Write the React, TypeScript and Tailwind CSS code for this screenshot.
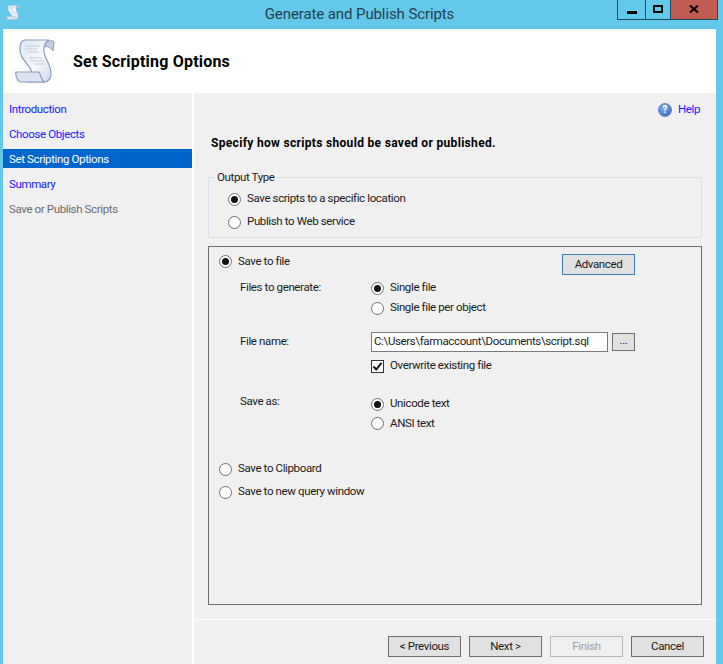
import React from "react";

function Radio({ on }: { on?: boolean }) {
  return (
    <span className="flex h-[13px] w-[13px] shrink-0 items-center justify-center rounded-full border border-[#707070] bg-white">
      {on && <span className="h-[7px] w-[7px] rounded-full bg-[#111111]" />}
    </span>
  );
}

function Opt({ on, label, className = "" }: { on?: boolean; label: string; className?: string }) {
  return (
    <div className={`flex items-center gap-[6px] ${className}`}>
      <Radio on={on} />
      <span>{label}</span>
    </div>
  );
}

function Scroll({ className }: { className: string }) {
  return (
    <svg viewBox="0 0 40 44" className={className}>
      <defs>
        <linearGradient id="sc" x1="0" y1="0" x2="1" y2="1">
          <stop offset="0" stopColor="#dfe6f2" />
          <stop offset="0.55" stopColor="#f6f8fc" />
          <stop offset="1" stopColor="#cfd8e8" />
        </linearGradient>
      </defs>
      <path d="M30 5 C33 1 38 1 39 3 L38 12 C35 8 32 7 30 8 Z" fill="#c3cee0" stroke="#8a9cbc" strokeWidth="1" />
      <path d="M10 1 L34 1 C30 3 28 8 29 13 C30 20 36 26 36 34 C36 40 33 43 29 43 L12 43 C17 41 18 37 16 31 C13 24 4 19 5 9 C5 4 7 1 10 1 Z" fill="url(#sc)" stroke="#8a9cbc" strokeWidth="1.2" />
      <path d="M1 33 L24 33 C26 36 26 40 29 43 L6 43 C3 43 0 37 1 33 Z" fill="#dde4f0" stroke="#8a9cbc" strokeWidth="1.2" />
      <path d="M11 7 H25 M10 10 H22 M13 13 H24 M14 19 H27 M15 22 H29 M19 25 H30" stroke="#c3ccdb" strokeWidth="1.2" />
    </svg>
  );
}

function Btn({ label, disabled, cls = "" }: { label: string; disabled?: boolean; cls?: string }) {
  return (
    <div
      className={`flex h-[21px] w-[73px] items-center justify-center border ${
        disabled ? "border-[#b4b8b8] bg-[#efefef] text-[#a0a0a0]" : "border-[#707070] bg-[#e1e1e1] text-[#1a1a1a]"
      } ${cls}`}
    >
      {label}
    </div>
  );
}

const nav = [
  { t: "Introduction", c: "text-[#1a1aff]" },
  { t: "Choose Objects", c: "text-[#1a1aff]" },
  { t: "Set Scripting Options", c: "bg-[#0066cc] text-white" },
  { t: "Summary", c: "text-[#1a1aff]" },
  { t: "Save or Publish Scripts", c: "text-[#6d6d6d]" },
];

export default function App() {
  return (
    <div
      className="flex h-[664px] w-[723px] flex-col overflow-hidden bg-[#63c9ea] pl-[3px] pr-[7px] text-[11.5px] leading-none tracking-[-0.37px] text-[#1a1a1a]"
      style={{ fontFamily: '"Roboto", "Liberation Sans", sans-serif' }}
    >
      {/* title bar */}
      <div className="relative flex h-[29px] shrink-0 items-center justify-center">
        <Scroll className="absolute left-[3px] top-[5px] h-[15px] w-[14px]" />
        <span className="text-[15px] tracking-[-0.1px] text-[#23404d]">Generate and Publish Scripts</span>
        <div className="absolute right-[-2px] top-0 flex h-[20px] border-x border-b border-[#1f4a5c]">
          <div className="flex w-[28px] items-end justify-center border-r border-[#1f4a5c] pb-[5px]">
            <span className="h-[3px] w-[10px] bg-black" />
          </div>
          <div className="flex w-[25px] items-center justify-center border-r border-[#1f4a5c] pb-[2px]">
            <span className="h-[8px] w-[10px] border-2 border-black" />
          </div>
          <div className="flex w-[46px] items-center justify-center bg-[#c25b52] pb-[2px]">
            <svg viewBox="0 0 10 8" className="h-[8px] w-[10px]">
              <path d="M1 0.5 L9 7.5 M9 0.5 L1 7.5" stroke="#000" strokeWidth="2" />
            </svg>
          </div>
        </div>
      </div>

      {/* header */}
      <div className="flex h-[64px] shrink-0 items-center bg-white">
        <Scroll className="ml-[12px] h-[44px] w-[40px]" />
        <span className="ml-[18px] pt-[1px] text-[16px] font-bold tracking-[0.2px] text-black">
          Set Scripting Options
        </span>
      </div>

      {/* body */}
      <div className="flex min-h-0 flex-1 gap-[2px] bg-white">
        <div className="flex w-[189px] shrink-0 flex-col gap-[6px] bg-[#f0f0f0] pt-[6px]">
          {nav.map((n) => (
            <div key={n.t} className={`flex h-[19px] items-center pl-[6px] pt-[3px] ${n.c}`}>
              {n.t}
            </div>
          ))}
        </div>

        <div className="flex min-w-0 flex-1 flex-col bg-[#f0f0f0]">
          <div className="flex-1 px-[14px]">
            <div className="mt-[8px] flex h-[16px] items-center justify-end gap-[6px] pr-[2px] pt-[1px]">
              <span className="flex h-[14px] w-[14px] items-center justify-center rounded-full border border-[#5f86c4] bg-[radial-gradient(circle_at_40%_35%,#8fb4ea,#2358b4)] text-[10px] font-bold text-white">
                ?
              </span>
              <span className="text-[#1a1aff]">Help</span>
            </div>
            <div className="mt-[20px] pl-[3px] text-[12px] font-bold tracking-[0.32px] text-black">
              Specify how scripts should be saved or published.
            </div>

            {/* output type */}
            <div className="relative mt-[28px] h-[61px] rounded-[2px] border border-[#d9dfe6] pl-[19px] pt-[14px]">
              <span className="absolute left-[6px] top-[-6px] bg-[#f0f0f0] px-[2px]">Output Type</span>
              <Opt on label="Save scripts to a specific location" className="h-[14px]" />
              <Opt label="Publish to Web service" className="mt-[9px] h-[14px]" />
            </div>

            {/* settings box */}
            <div className="mt-[8px] h-[359px] border border-[#6d6d6d] pt-[7px]">
              <div className="flex h-[22px] items-start justify-between pl-[10px] pr-[66px]">
                <Opt on label="Save to file" className="h-[15px]" />
                <div className="flex h-[21px] w-[73px] items-center justify-center border border-[#3c7fb1] bg-[#e1e1e1]">
                  Advanced
                </div>
              </div>

              <div className="mt-[2px] grid grid-cols-[131px_1fr] pl-[31px] pr-[66px]">
                <div className="flex h-[20px] items-center">Files to generate:</div>
                <div>
                  <Opt on label="Single file" className="h-[20px]" />
                  <Opt label="Single file per object" className="h-[20px]" />
                </div>

                <div className="mt-[14px] flex h-[20px] items-center">File name:</div>
                <div className="mt-[14px] flex items-start justify-between">
                  <div className="flex h-[20px] w-[237px] items-center border border-[#7a7a7a] bg-white pl-[2px] text-[#222222]">
                    C:\Users\farmaccount\Documents\script.sql
                  </div>
                  <div className="mt-[1px] flex h-[18px] w-[23px] items-center justify-center border border-[#707070] bg-[#e1e1e1] pb-[2px]">
                    ...
                  </div>
                </div>

                <div />
                <div className="mt-[4px] flex h-[20px] items-center gap-[6px]">
                  <span className="flex h-[13px] w-[13px] items-center justify-center border border-[#333333] bg-white">
                    <svg viewBox="0 0 11 11" className="h-[11px] w-[11px]">
                      <path d="M1.5 5.5 L4.2 8.5 L9.5 1.8" fill="none" stroke="#111" strokeWidth="2" />
                    </svg>
                  </span>
                  <span>Overwrite existing file</span>
                </div>

                <div className="mt-[18px] flex h-[16px] items-center">Save as:</div>
                <div className="mt-[18px]">
                  <Opt on label="Unicode text" className="h-[20px]" />
                  <Opt label="ANSI text" className="h-[19px]" />
                </div>
              </div>

              <div className="pl-[10px]">
                <Opt label="Save to Clipboard" className="mt-[26px] h-[20px]" />
                <Opt label="Save to new query window" className="mt-[3px] h-[20px]" />
              </div>
            </div>
          </div>

          <div className="flex h-[45px] shrink-0 items-start justify-end gap-[8px] border-t border-white pr-[12px] pt-[16px]">
            <Btn label="< Previous" />
            <Btn label="Next >" />
            <Btn label="Finish" disabled />
            <Btn label="Cancel" />
          </div>
        </div>
      </div>
    </div>
  );
}
